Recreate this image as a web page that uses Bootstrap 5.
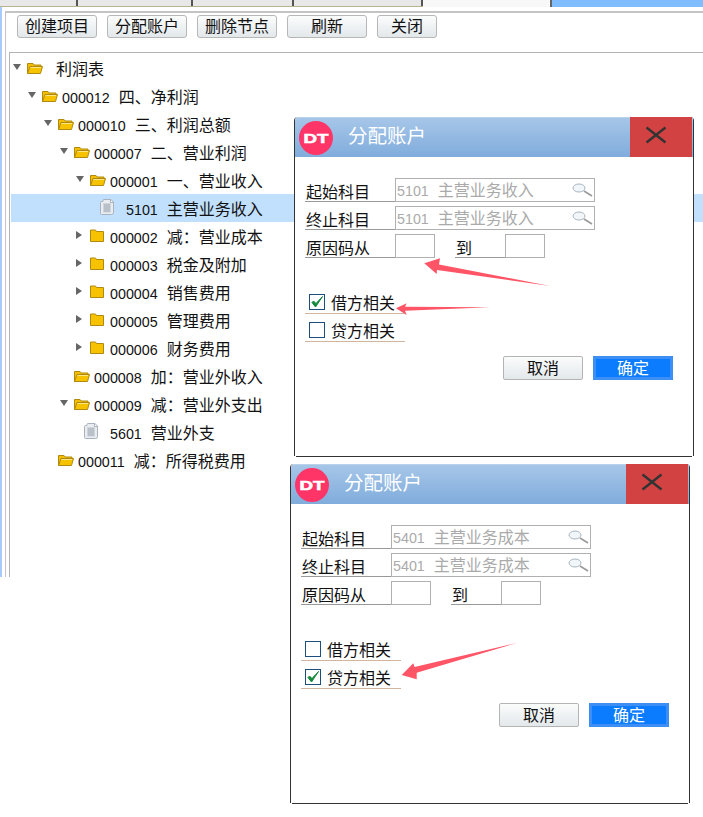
<!DOCTYPE html>
<html lang="zh">
<head>
<meta charset="utf-8">
<title>分配账户</title>
<link href="https://cdn.jsdelivr.net/npm/bootstrap@5.3.0/dist/css/bootstrap.min.css" rel="stylesheet">
<style>
html,body{margin:0;background:#fff}
body{font-family:"Liberation Sans","Noto Sans CJK SC",sans-serif;font-size:16px;line-height:20px;color:#111;width:703px;height:817px;position:relative;overflow:hidden}
.cd{font-size:14.3px}
.gp{margin-left:9px}
.shell{height:577px;border-left:2px solid #a6cbff;background:#fff}
.tabstrip{height:7px;margin-left:-2px;border-bottom:1px solid #b9b391;background:#e8e8e8}
.tabcell{border-right:2px solid #555;height:6px}
.tabcell.w1{width:78px}.tabcell.w2{width:115px}.tabcell.w3{width:101px}.tabcell.w4{width:129px}
.tabon{width:129px;height:7px;background:#f8f8f8;border-right:2px solid #666}
.tabfill{height:7px;background:#80bdff}
.panel{margin:4px 0 0 3px;height:566px;border-top:2px solid #c4c4c4;border-left:1px solid #c4c4c4;padding:2px 0 0 11px}
.toolb{height:37px;gap:10px}
.tb{width:80px;height:23px;padding:0;border:1px solid #b7b7b7;border-radius:3px;background:linear-gradient(#fbfcfc,#e3e8eb);color:#111;font-size:16px;line-height:20px}
.tb.nar{width:60px}
.treebox{margin-left:-8px;height:525px;border-top:1px solid #b4b4b4;border-left:1px solid #b4b4b4;padding:1px 0 0 1px}
.trow{height:28px;padding-top:3px;white-space:nowrap}
.trow.on{background:#c1e0fd}
.l0{padding-left:0}.l1{padding-left:15px}.l2{padding-left:31px}.l3{padding-left:47px}.l4{padding-left:63px}.l5{padding-left:79px}
.slot{width:16px;height:16px;flex:none;padding:7px 0 0 2px}
.slot svg,.ico svg{display:block}
.slot svg.rt{margin-top:-1px}
.ico{width:16px;height:16px;flex:none;margin-right:4px;margin-top:5px}
.ico.shut{margin-top:4px}
.ico.wide{margin-right:13px}
.ico.doc{margin:2px 10px 0 -6px}
.ln{padding-top:3px}
.dlg{position:absolute;width:400px;height:339px;background:#fff;border:solid #333;border-width:0 1px;border-radius:4px 4px 0 0}
.dlg::after{content:"";position:absolute;left:1px;right:1px;bottom:-1px;height:1px;background:#333}
.dlg.one{left:294px;top:117px}
.dlg.two{left:290px;top:464px}
.dhead{height:40px;background:linear-gradient(#a6c6e8,#80acdc);border-top:1px solid #b9d2ec;border-radius:4px 0 0 0;color:#fff}
.lg{width:34px;height:34px;margin-left:4px;flex:none}
.dtitle{font-size:19.5px;margin:0 0 4px 15px}
.dclose{width:62px;height:40px;margin:-1px 1px 0 0;background:#d24242;border:0;padding:0}
.dclose svg{margin:0 10px 4px 0}
.dbody{padding:21px 20px 0 10px}
.frow{height:24px;margin-bottom:4px}
.flab{width:90px;height:24px;border-bottom:1px solid #999;padding:5px 0 0 1px;line-height:20px;flex:none;white-space:nowrap}
.flab.to{width:50px;margin-left:20px}
.fin{width:200px;height:24px;border:1px solid #b0b0b0;color:#aaa;padding:2px 0 0 1px;white-space:nowrap;flex:none}
.fin.sm{width:40px}
.fin svg{margin-left:auto;margin-right:1px;margin-top:2px}
.chks{margin-top:28px}
.crow{width:100px;height:28px;border-bottom:1px solid #d2b59f;padding:8px 0 0 4px;white-space:nowrap}
.cbox{width:16px;height:16px;border:1px solid #1c4f7e;margin-right:6px;flex:none}
.cbox svg{display:block}
.acts{margin-top:14px;gap:10px}
.bc{width:80px;height:24px;padding:2px 0 0;font-size:16px;line-height:20px;border:1px solid #b4b4b4;border-radius:2px;background:linear-gradient(#fbfcfc,#e3e8eb);color:#111}
.bok{width:80px;height:24px;padding:1px 0 0;font-size:16px;line-height:18px;border:3px solid #3d8ff5;border-radius:0;background:#0c7cff;color:#fff}
.bok:hover,.bc:hover,.tb:hover{color:inherit}
.arrows{position:absolute;left:0;top:0;pointer-events:none}
</style>
</head>
<body>
<svg width="0" height="0" class="position-absolute">
<defs>
<symbol id="fo" viewBox="0 0 16 12"><path d="M.5 11.5V1.5H6L7.2 3H14V5" fill="#f5bd00" stroke="#b08a10"/><path d="M.5 11.5L3 4.5H15.5L13.5 11.5Z" fill="#f7c200" stroke="#b08a10"/><path d="M3.5 5.5H14" stroke="#ffe680"/></symbol>
<symbol id="fc" viewBox="0 0 14 13"><path d="M.5 12.5V1H5.5L6.5 2.5H13.5V12.5Z" fill="#f7c200" stroke="#b08a10"/></symbol>
<symbol id="dc" viewBox="0 0 14 16"><path d="M.5 3.5Q.5 2.5 1.5 2.5H3V1.5Q3 .5 4 .5H11L13.5 3V13.5Q13.5 15.5 11.5 15.5H1.5Q.5 15.5 .5 14.5Z" fill="#e9edf2" stroke="#aab2bd"/><rect x="3" y="4" width="8" height="9.5" fill="#cfd5dc"/><path d="M4 6H10M4 8H10M4 10H10M4 12H10" stroke="#a3abb5"/><path d="M10.5 1V3.5H13" fill="#fff" stroke="#aab2bd"/></symbol>
<symbol id="mg" viewBox="0 0 21 14"><ellipse cx="7" cy="5" rx="6" ry="4" fill="#f1f6fa" stroke="#a8b4bd"/><path d="M12 8L20 13" stroke="#9a9a9a" stroke-width="1.6"/></symbol>
<symbol id="ck" viewBox="0 0 14 14"><path d="M2 7.5L5.5 12L12.5 1.5L6 8.5L3.5 6Z" fill="#138a3c" stroke="#138a3c"/></symbol>
<symbol id="lo" viewBox="0 0 34 34"><circle cx="17" cy="17" r="17" fill="#ff3467"/><text x="17" y="21.5" text-anchor="middle" font-family="Liberation Sans,sans-serif" font-weight="700" font-size="12" textLength="25" lengthAdjust="spacingAndGlyphs" stroke="#fff" stroke-width=".5" fill="#fff">DT</text></symbol>
<symbol id="xx" viewBox="0 0 22 18"><path d="M1.5 1.5L20.5 16.5M20.5 1.5L1.5 16.5" stroke="#333" stroke-width="2.4"/></symbol>
</defs>
</svg>

<div class="shell">
  <div class="tabstrip d-flex">
    <div class="tabcell w1"></div><div class="tabcell w2"></div><div class="tabcell w3"></div><div class="tabcell w4"></div>
    <div class="tabon"></div><div class="tabfill flex-grow-1"></div>
  </div>
  <div class="panel">
    <div class="toolb d-flex">
      <button class="btn tb">创建项目</button><button class="btn tb">分配账户</button><button class="btn tb">删除节点</button><button class="btn tb">刷新</button><button class="btn tb nar">关闭</button>
    </div>
    <div class="treebox">
      <div class="trow l0 d-flex"><span class="slot"><svg width="8" height="6"><path d="M0 0H8L4 6Z" fill="#666"/></svg></span><span class="ico wide"><svg width="16" height="12"><use href="#fo"/></svg></span><span class="ln">利润表</span></div>
      <div class="trow l1 d-flex"><span class="slot"><svg width="8" height="6"><path d="M0 0H8L4 6Z" fill="#666"/></svg></span><span class="ico"><svg width="16" height="12"><use href="#fo"/></svg></span><span class="ln"><span class="cd">000012</span><span class="gp">四、净利润</span></span></div>
      <div class="trow l2 d-flex"><span class="slot"><svg width="8" height="6"><path d="M0 0H8L4 6Z" fill="#666"/></svg></span><span class="ico"><svg width="16" height="12"><use href="#fo"/></svg></span><span class="ln"><span class="cd">000010</span><span class="gp">三、利润总额</span></span></div>
      <div class="trow l3 d-flex"><span class="slot"><svg width="8" height="6"><path d="M0 0H8L4 6Z" fill="#666"/></svg></span><span class="ico"><svg width="16" height="12"><use href="#fo"/></svg></span><span class="ln"><span class="cd">000007</span><span class="gp">二、营业利润</span></span></div>
      <div class="trow l4 d-flex"><span class="slot"><svg width="8" height="6"><path d="M0 0H8L4 6Z" fill="#666"/></svg></span><span class="ico"><svg width="16" height="12"><use href="#fo"/></svg></span><span class="ln"><span class="cd">000001</span><span class="gp">一、营业收入</span></span></div>
      <div class="trow on l5 d-flex"><span class="slot"></span><span class="ico doc"><svg width="14" height="16"><use href="#dc"/></svg></span><span class="ln"><span class="cd">5101</span><span class="gp">主营业务收入</span></span></div>
      <div class="trow l4 d-flex"><span class="slot"><svg class="rt" width="6" height="8"><path d="M0 0V8L6 4Z" fill="#666"/></svg></span><span class="ico shut"><svg width="14" height="13"><use href="#fc"/></svg></span><span class="ln"><span class="cd">000002</span><span class="gp">减：营业成本</span></span></div>
      <div class="trow l4 d-flex"><span class="slot"><svg class="rt" width="6" height="8"><path d="M0 0V8L6 4Z" fill="#666"/></svg></span><span class="ico shut"><svg width="14" height="13"><use href="#fc"/></svg></span><span class="ln"><span class="cd">000003</span><span class="gp">税金及附加</span></span></div>
      <div class="trow l4 d-flex"><span class="slot"><svg class="rt" width="6" height="8"><path d="M0 0V8L6 4Z" fill="#666"/></svg></span><span class="ico shut"><svg width="14" height="13"><use href="#fc"/></svg></span><span class="ln"><span class="cd">000004</span><span class="gp">销售费用</span></span></div>
      <div class="trow l4 d-flex"><span class="slot"><svg class="rt" width="6" height="8"><path d="M0 0V8L6 4Z" fill="#666"/></svg></span><span class="ico shut"><svg width="14" height="13"><use href="#fc"/></svg></span><span class="ln"><span class="cd">000005</span><span class="gp">管理费用</span></span></div>
      <div class="trow l4 d-flex"><span class="slot"><svg class="rt" width="6" height="8"><path d="M0 0V8L6 4Z" fill="#666"/></svg></span><span class="ico shut"><svg width="14" height="13"><use href="#fc"/></svg></span><span class="ln"><span class="cd">000006</span><span class="gp">财务费用</span></span></div>
      <div class="trow l3 d-flex"><span class="slot"></span><span class="ico"><svg width="16" height="12"><use href="#fo"/></svg></span><span class="ln"><span class="cd">000008</span><span class="gp">加：营业外收入</span></span></div>
      <div class="trow l3 d-flex"><span class="slot"><svg width="8" height="6"><path d="M0 0H8L4 6Z" fill="#666"/></svg></span><span class="ico"><svg width="16" height="12"><use href="#fo"/></svg></span><span class="ln"><span class="cd">000009</span><span class="gp">减：营业外支出</span></span></div>
      <div class="trow l4 d-flex"><span class="slot"></span><span class="ico doc"><svg width="14" height="16"><use href="#dc"/></svg></span><span class="ln"><span class="cd">5601</span><span class="gp">营业外支</span></span></div>
      <div class="trow l2 d-flex"><span class="slot"></span><span class="ico"><svg width="16" height="12"><use href="#fo"/></svg></span><span class="ln"><span class="cd">000011</span><span class="gp">减：所得税费用</span></span></div>
    </div>
  </div>
</div>

<div class="dlg one">
  <div class="dhead d-flex align-items-center">
    <svg class="lg" width="34" height="34"><use href="#lo"/></svg>
    <span class="dtitle flex-grow-1">分配账户</span>
    <button class="dclose d-flex align-items-center justify-content-center"><svg width="22" height="18"><use href="#xx"/></svg></button>
  </div>
  <div class="dbody">
    <div class="frow d-flex"><div class="flab">起始科目</div><div class="fin d-flex"><span class="cd">5101</span><span class="gp">主营业务收入</span><svg width="21" height="14"><use href="#mg"/></svg></div></div>
    <div class="frow d-flex"><div class="flab">终止科目</div><div class="fin d-flex"><span class="cd">5101</span><span class="gp">主营业务收入</span><svg width="21" height="14"><use href="#mg"/></svg></div></div>
    <div class="frow d-flex"><div class="flab">原因码从</div><div class="fin sm"></div><div class="flab to">到</div><div class="fin sm"></div></div>
    <div class="chks">
      <div class="crow d-flex"><span class="cbox"><svg width="14" height="14"><use href="#ck"/></svg></span>借方相关</div>
      <div class="crow d-flex"><span class="cbox"></span>贷方相关</div>
    </div>
    <div class="acts d-flex justify-content-end"><button class="btn bc">取消</button><button class="btn bok">确定</button></div>
  </div>
</div>

<div class="dlg two">
  <div class="dhead d-flex align-items-center">
    <svg class="lg" width="34" height="34"><use href="#lo"/></svg>
    <span class="dtitle flex-grow-1">分配账户</span>
    <button class="dclose d-flex align-items-center justify-content-center"><svg width="22" height="18"><use href="#xx"/></svg></button>
  </div>
  <div class="dbody">
    <div class="frow d-flex"><div class="flab">起始科目</div><div class="fin d-flex"><span class="cd">5401</span><span class="gp">主营业务成本</span><svg width="21" height="14"><use href="#mg"/></svg></div></div>
    <div class="frow d-flex"><div class="flab">终止科目</div><div class="fin d-flex"><span class="cd">5401</span><span class="gp">主营业务成本</span><svg width="21" height="14"><use href="#mg"/></svg></div></div>
    <div class="frow d-flex"><div class="flab">原因码从</div><div class="fin sm"></div><div class="flab to">到</div><div class="fin sm"></div></div>
    <div class="chks">
      <div class="crow d-flex"><span class="cbox"></span>借方相关</div>
      <div class="crow d-flex"><span class="cbox"><svg width="14" height="14"><use href="#ck"/></svg></span>贷方相关</div>
    </div>
    <div class="acts d-flex justify-content-end"><button class="btn bc">取消</button><button class="btn bok">确定</button></div>
  </div>
</div>

<svg class="arrows" width="703" height="817">
  <g fill="#ff5566">
    <polygon points="424.3,263.3 440,258.3 439,264.5 550,286 437,270 436.7,274"/>
    <polygon points="396,308.3 406.7,303.3 405,306.7 490,307.3 405,310.7 406.7,315"/>
    <polygon points="401.7,675 413.3,663.3 414.5,667 517.7,642.7 416.7,672.7 416.7,679.3"/>
  </g>
</svg>
<script src="https://cdn.jsdelivr.net/npm/bootstrap@5.3.0/dist/js/bootstrap.bundle.min.js"></script>
</body>
</html>
